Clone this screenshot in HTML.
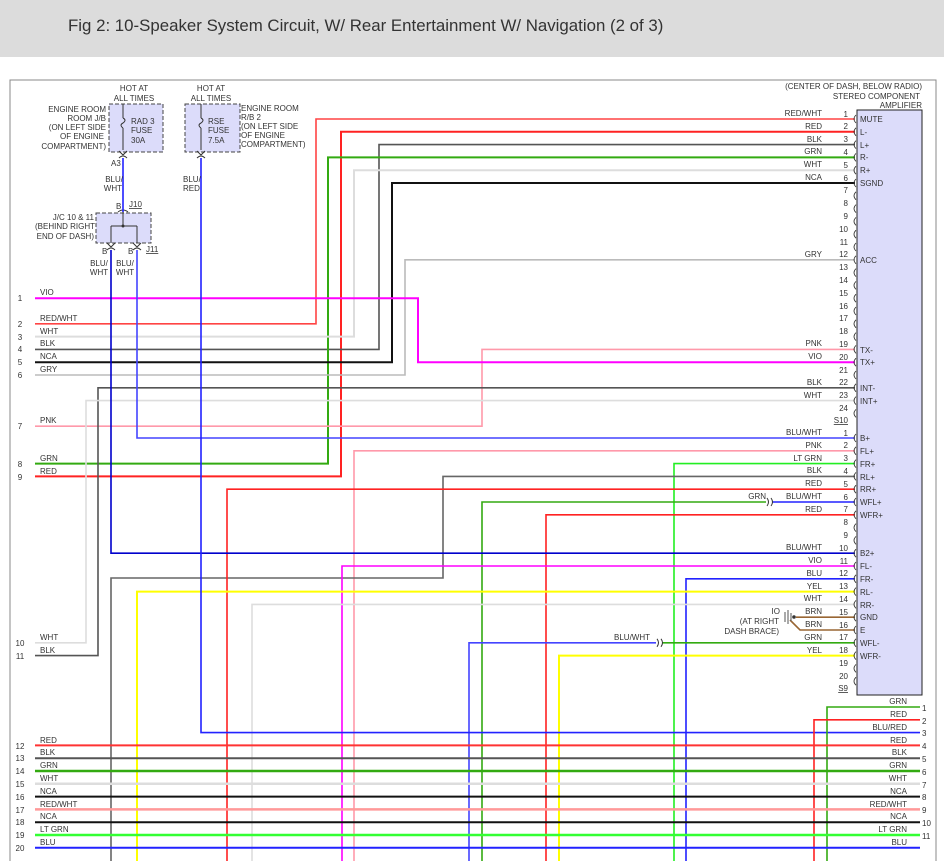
<!DOCTYPE html>
<html><head><meta charset="utf-8"><style>
html,body{margin:0;padding:0;background:#fff;width:944px;height:861px;overflow:hidden}
.hdr{position:absolute;left:0;top:0;width:944px;height:57px;background:#dcdcdc}
.hdr span{position:absolute;left:68px;top:16px;font:16.85px "Liberation Sans",sans-serif;color:#333}
svg{position:absolute;left:0;top:0}
text{font-family:"Liberation Sans",sans-serif;font-size:8px;fill:#333}
.r{text-anchor:end}.m{text-anchor:middle}
path{fill:none}
</style></head><body>
<div class="hdr"><span>Fig 2: 10-Speaker System Circuit, W/ Rear Entertainment W/ Navigation (2 of 3)</span></div>
<svg width="944" height="861" viewBox="0 0 944 861">
<path d="M10,861 V80 H936 V861" stroke="#888" stroke-width="1"/>
<rect x="109" y="104" width="54" height="48" fill="#dcdcfa" stroke="#444" stroke-dasharray="4,2"/>
<rect x="185" y="104" width="55" height="48" fill="#dcdcfa" stroke="#444" stroke-dasharray="4,2"/>
<rect x="96" y="213" width="55" height="30" fill="#dcdcfa" stroke="#444" stroke-dasharray="4,2"/>
<rect x="857" y="110" width="65" height="585" fill="#dcdcfa" stroke="#222"/>
<path d="M123,104 V118 M123,128 V150 M123,118 q4,2 0,5 q-4,2 0,5" stroke="#333"/>
<path d="M201,104 V118 M201,128 V150 M201,118 q4,2 0,5 q-4,2 0,5" stroke="#333"/>
<path d="M119,151 l4,4 l4,-4 M197,151 l4,4 l4,-4 M119,158 q4,-4 8,0 M197,158 q4,-4 8,0" stroke="#333"/>
<path d="M123,158 V226 M111,226 H137 M111,226 V243 M137,226 V243 M118,212 q5,-4 10,0 M107,243 l4,4 l4,-4 M133,243 l4,4 l4,-4 M107,250 q4,-4 8,0 M133,250 q4,-4 8,0" stroke="#333"/>
<circle cx="123" cy="226" r="1.5" fill="#333"/>
<g stroke-width="1.6">
<path d="M123,158 V212" stroke="#22f"/>
<path d="M855,119 H316 V323.8 H35" stroke="#f44"/>
<path d="M855,131.8 H341 V476.4 H35" stroke="#f22" stroke-width="2"/>
<path d="M855,144.6 H379 V349.4 H35" stroke="#555"/>
<path d="M855,157.4 H328 V463.6 H35" stroke="#3a1" stroke-width="2"/>
<path d="M855,170.2 H354 V336.6 H35" stroke="#ddd" stroke-width="2"/>
<path d="M855,183 H392 V362.2 H35" stroke="#111" stroke-width="2"/>
<path d="M855,259.8 H405 V375 H35" stroke="#bbb"/>
<path d="M855,349.4 H482 V426.2 H35" stroke="#f9a"/>
<path d="M855,362.2 H418 V298.2 H35" stroke="#f0f" stroke-width="2"/>
<path d="M855,387.8 H98 V655.6 H35" stroke="#555"/>
<path d="M855,400.6 H86 V642.8 H35" stroke="#ddd"/>
<path d="M855,438 H137 V250" stroke="#44f"/>
<path d="M855,450.8 H354 V861" stroke="#f9a"/>
<path d="M855,463.6 H674 V861" stroke="#2e2"/>
<path d="M855,476.4 H443 V578 H111 V861" stroke="#666"/>
<path d="M855,489.2 H227 V861" stroke="#f22"/>
<path d="M855,502 H772" stroke="#22f"/>
<path d="M766,502 H482 V861" stroke="#3a1"/>
<path d="M855,514.8 H546 V861" stroke="#f22"/>
<path d="M855,553.2 H111 V250" stroke="#00c"/>
<path d="M855,566 H342 V861" stroke="#f0f"/>
<path d="M855,578.8 H686 V861" stroke="#22f"/>
<path d="M855,591.6 H137 V861" stroke="#ff0" stroke-width="2"/>
<path d="M855,604.4 H252 V861" stroke="#ddd"/>
<path d="M855,642.8 H662" stroke="#3a1"/>
<path d="M656,642.8 H469 V861" stroke="#44f"/>
<path d="M855,655.6 H559 V861" stroke="#ff0" stroke-width="2"/>
<path d="M201,158 V732.6 H920" stroke="#22f"/>
<path d="M920,707 H827 V861" stroke="#3a1"/>
<path d="M920,719.8 H814 V861" stroke="#f22"/>
<path d="M35,745.4 H920" stroke="#f33" stroke-width="2"/>
<path d="M35,758.2 H920" stroke="#555" stroke-width="2"/>
<path d="M35,771 H920" stroke="#3a1" stroke-width="2.5"/>
<path d="M35,783.8 H920" stroke="#ddd" stroke-width="2.5"/>
<path d="M35,796.6 H920" stroke="#111" stroke-width="2"/>
<path d="M35,809.4 H920" stroke="#f99" stroke-width="2.5"/>
<path d="M35,822.2 H920" stroke="#111" stroke-width="2"/>
<path d="M35,835 H920" stroke="#3f3" stroke-width="2.5"/>
<path d="M35,847.8 H920" stroke="#22f" stroke-width="2"/>
<path d="M796,617.2 H855 M790,620 L800,630 H855" stroke="#963"/>
</g>
<path d="M767,498 q3,4 0,8 M771,498 q3,4 0,8 M657,638.8 q3,4 0,8 M661,638.8 q3,4 0,8" stroke="#333"/>
<path d="M785,612 V622 M788,610 V624 M791,613 V621" stroke="#555"/>
<circle cx="794" cy="617" r="1.8" fill="#333"/>
<g stroke="#333" stroke-width="0.8">
<path d="M856,115 q-4,4 0,8 M856,127.8 q-4,4 0,8 M856,140.6 q-4,4 0,8 M856,153.4 q-4,4 0,8 M856,166.2 q-4,4 0,8 M856,179 q-4,4 0,8 M856,191.8 q-4,4 0,8 M856,204.6 q-4,4 0,8 M856,217.4 q-4,4 0,8 M856,230.2 q-4,4 0,8 M856,243 q-4,4 0,8 M856,255.8 q-4,4 0,8 M856,268.6 q-4,4 0,8 M856,281.4 q-4,4 0,8 M856,294.2 q-4,4 0,8 M856,307 q-4,4 0,8 M856,319.8 q-4,4 0,8 M856,332.6 q-4,4 0,8 M856,345.4 q-4,4 0,8 M856,358.2 q-4,4 0,8 M856,371 q-4,4 0,8 M856,383.8 q-4,4 0,8 M856,396.6 q-4,4 0,8 M856,409.4 q-4,4 0,8"/>
<path d="M856,434 q-4,4 0,8 M856,446.8 q-4,4 0,8 M856,459.6 q-4,4 0,8 M856,472.4 q-4,4 0,8 M856,485.2 q-4,4 0,8 M856,498 q-4,4 0,8 M856,510.8 q-4,4 0,8 M856,523.6 q-4,4 0,8 M856,536.4 q-4,4 0,8 M856,549.2 q-4,4 0,8 M856,562 q-4,4 0,8 M856,574.8 q-4,4 0,8 M856,587.6 q-4,4 0,8 M856,600.4 q-4,4 0,8 M856,613.2 q-4,4 0,8 M856,626 q-4,4 0,8 M856,638.8 q-4,4 0,8 M856,651.6 q-4,4 0,8 M856,664.4 q-4,4 0,8 M856,677.2 q-4,4 0,8"/>
</g>
<text class="m" x="134" y="91">HOT AT</text><text class="m" x="134" y="101">ALL TIMES</text>
<text class="m" x="211" y="91">HOT AT</text><text class="m" x="211" y="101">ALL TIMES</text>
<text class="r" x="106" y="112">ENGINE ROOM</text><text class="r" x="106" y="121">ROOM J/B</text><text class="r" x="106" y="130">(ON LEFT SIDE</text><text class="r" x="104" y="139">OF ENGINE</text><text class="r" x="106" y="149">COMPARTMENT)</text>
<text x="131" y="124">RAD 3</text><text x="131" y="133">FUSE</text><text x="131" y="143">30A</text>
<text x="208" y="124">RSE</text><text x="208" y="133">FUSE</text><text x="208" y="143">7.5A</text>
<text x="241" y="111">ENGINE ROOM</text><text x="241" y="120">R/B 2</text><text x="241" y="129">(ON LEFT SIDE</text><text x="241" y="138">OF ENGINE</text><text x="241" y="147">COMPARTMENT)</text>
<text x="111" y="166">A3</text>
<text class="r" x="123" y="182">BLU/</text><text class="r" x="122" y="191">WHT</text>
<text x="183" y="182">BLU/</text><text x="183" y="191">RED</text>
<text x="116" y="209">B</text><text x="129" y="207" text-decoration="underline">J10</text>
<text class="r" x="94" y="220">J/C 10 &amp; 11</text><text class="r" x="95" y="229">(BEHIND RIGHT</text><text class="r" x="94" y="239">END OF DASH)</text>
<text x="102" y="254">B</text><text x="128" y="254">B</text><text x="146" y="252" text-decoration="underline">J11</text>
<text class="m" x="99" y="266">BLU/</text><text class="m" x="99" y="275">WHT</text>
<text class="m" x="125" y="266">BLU/</text><text class="m" x="125" y="275">WHT</text>
<text class="r" x="922" y="89">(CENTER OF DASH, BELOW RADIO)</text>
<text class="r" x="920" y="99">STEREO COMPONENT</text>
<text class="r" x="922" y="108">AMPLIFIER</text>
<g>
<text class="m" x="20" y="301">1</text><text class="m" x="20" y="327">2</text><text class="m" x="20" y="340">3</text><text class="m" x="20" y="352">4</text><text class="m" x="20" y="365">5</text><text class="m" x="20" y="378">6</text><text class="m" x="20" y="429">7</text><text class="m" x="20" y="467">8</text><text class="m" x="20" y="480">9</text><text class="m" x="20" y="646">10</text><text class="m" x="20" y="659">11</text>
<text class="m" x="20" y="749">12</text><text class="m" x="20" y="761">13</text><text class="m" x="20" y="774">14</text><text class="m" x="20" y="787">15</text><text class="m" x="20" y="800">16</text><text class="m" x="20" y="813">17</text><text class="m" x="20" y="825">18</text><text class="m" x="20" y="838">19</text><text class="m" x="20" y="851">20</text>
</g>
<text x="40" y="295">VIO</text><text x="40" y="321">RED/WHT</text><text x="40" y="334">WHT</text><text x="40" y="346">BLK</text><text x="40" y="359">NCA</text><text x="40" y="372">GRY</text><text x="40" y="423">PNK</text><text x="40" y="461">GRN</text><text x="40" y="474">RED</text><text x="40" y="640">WHT</text><text x="40" y="653">BLK</text>
<text x="40" y="743">RED</text><text x="40" y="755">BLK</text><text x="40" y="768">GRN</text><text x="40" y="781">WHT</text><text x="40" y="794">NCA</text><text x="40" y="807">RED/WHT</text><text x="40" y="819">NCA</text><text x="40" y="832">LT GRN</text><text x="40" y="845">BLU</text>
<text class="r" x="907" y="704">GRN</text><text class="r" x="907" y="717">RED</text><text class="r" x="907" y="730">BLU/RED</text><text class="r" x="907" y="743">RED</text><text class="r" x="907" y="755">BLK</text><text class="r" x="907" y="768">GRN</text><text class="r" x="907" y="781">WHT</text><text class="r" x="907" y="794">NCA</text><text class="r" x="907" y="807">RED/WHT</text><text class="r" x="907" y="819">NCA</text><text class="r" x="907" y="832">LT GRN</text><text class="r" x="907" y="845">BLU</text>
<text x="922" y="711">1</text><text x="922" y="724">2</text><text x="922" y="736">3</text><text x="922" y="749">4</text><text x="922" y="762">5</text><text x="922" y="775">6</text><text x="922" y="788">7</text><text x="922" y="800">8</text><text x="922" y="813">9</text><text x="922" y="826">10</text><text x="922" y="839">11</text>
<g>
<text class="r" x="848" y="117">1</text><text class="r" x="848" y="129">2</text><text class="r" x="848" y="142">3</text><text class="r" x="848" y="155">4</text><text class="r" x="848" y="168">5</text><text class="r" x="848" y="181">6</text><text class="r" x="848" y="193">7</text><text class="r" x="848" y="206">8</text><text class="r" x="848" y="219">9</text><text class="r" x="848" y="232">10</text><text class="r" x="848" y="245">11</text><text class="r" x="848" y="257">12</text><text class="r" x="848" y="270">13</text><text class="r" x="848" y="283">14</text><text class="r" x="848" y="296">15</text><text class="r" x="848" y="309">16</text><text class="r" x="848" y="321">17</text><text class="r" x="848" y="334">18</text><text class="r" x="848" y="347">19</text><text class="r" x="848" y="360">20</text><text class="r" x="848" y="373">21</text><text class="r" x="848" y="385">22</text><text class="r" x="848" y="398">23</text><text class="r" x="848" y="411">24</text>
<text class="r" x="848" y="423" text-decoration="underline">S10</text>
<text class="r" x="848" y="436">1</text><text class="r" x="848" y="448">2</text><text class="r" x="848" y="461">3</text><text class="r" x="848" y="474">4</text><text class="r" x="848" y="487">5</text><text class="r" x="848" y="500">6</text><text class="r" x="848" y="512">7</text><text class="r" x="848" y="525">8</text><text class="r" x="848" y="538">9</text><text class="r" x="848" y="551">10</text><text class="r" x="848" y="564">11</text><text class="r" x="848" y="576">12</text><text class="r" x="848" y="589">13</text><text class="r" x="848" y="602">14</text><text class="r" x="848" y="615">15</text><text class="r" x="848" y="628">16</text><text class="r" x="848" y="640">17</text><text class="r" x="848" y="653">18</text><text class="r" x="848" y="666">19</text><text class="r" x="848" y="679">20</text>
<text class="r" x="848" y="691" text-decoration="underline">S9</text>
</g>
<text class="r" x="822" y="116">RED/WHT</text><text class="r" x="822" y="129">RED</text><text class="r" x="822" y="142">BLK</text><text class="r" x="822" y="154">GRN</text><text class="r" x="822" y="167">WHT</text><text class="r" x="822" y="180">NCA</text><text class="r" x="822" y="257">GRY</text><text class="r" x="822" y="346">PNK</text><text class="r" x="822" y="359">VIO</text><text class="r" x="822" y="385">BLK</text><text class="r" x="822" y="398">WHT</text>
<text class="r" x="822" y="435">BLU/WHT</text><text class="r" x="822" y="448">PNK</text><text class="r" x="822" y="461">LT GRN</text><text class="r" x="822" y="473">BLK</text><text class="r" x="822" y="486">RED</text><text class="r" x="822" y="499">BLU/WHT</text><text class="r" x="766" y="499">GRN</text><text class="r" x="822" y="512">RED</text><text class="r" x="822" y="550">BLU/WHT</text><text class="r" x="822" y="563">VIO</text><text class="r" x="822" y="576">BLU</text><text class="r" x="822" y="589">YEL</text><text class="r" x="822" y="601">WHT</text><text class="r" x="822" y="614">BRN</text><text class="r" x="822" y="627">BRN</text><text class="r" x="822" y="640">GRN</text><text class="r" x="650" y="640">BLU/WHT</text><text class="r" x="822" y="653">YEL</text>
<text class="r" x="780" y="614">IO</text><text class="r" x="779" y="624">(AT RIGHT</text><text class="r" x="779" y="634">DASH BRACE)</text>
<text x="860" y="122">MUTE</text><text x="860" y="135">L-</text><text x="860" y="148">L+</text><text x="860" y="160">R-</text><text x="860" y="173">R+</text><text x="860" y="186">SGND</text><text x="860" y="263">ACC</text><text x="860" y="353">TX-</text><text x="860" y="365">TX+</text><text x="860" y="391">INT-</text><text x="860" y="404">INT+</text>
<text x="860" y="441">B+</text><text x="860" y="454">FL+</text><text x="860" y="467">FR+</text><text x="860" y="480">RL+</text><text x="860" y="492">RR+</text><text x="860" y="505">WFL+</text><text x="860" y="518">WFR+</text><text x="860" y="556">B2+</text><text x="860" y="569">FL-</text><text x="860" y="582">FR-</text><text x="860" y="595">RL-</text><text x="860" y="608">RR-</text><text x="860" y="620">GND</text><text x="860" y="633">E</text><text x="860" y="646">WFL-</text><text x="860" y="659">WFR-</text>
</svg>
</body></html>
